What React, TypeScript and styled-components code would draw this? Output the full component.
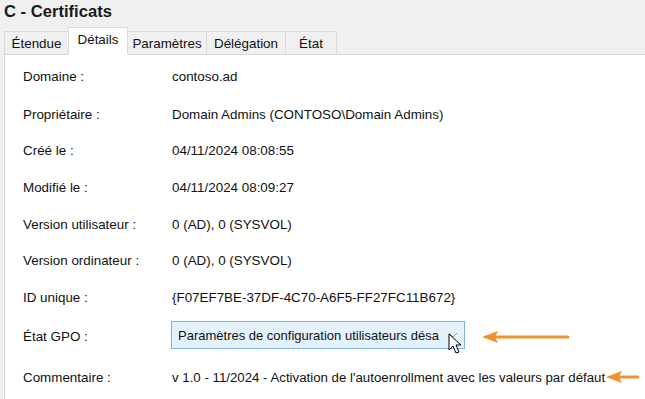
import React from "react";
import styled, { createGlobalStyle } from "styled-components";

const Global = createGlobalStyle`
  html, body { margin: 0; padding: 0; background: #f0f0f0; }
  body { font-family: "Liberation Sans", Arial, sans-serif; overflow: hidden; }
`;

const Page = styled.div`
  width: 645px;
  height: 399px;
  display: flex;
  flex-direction: column;
  background: #f0f0f0;
  overflow: hidden;
`;

const Title = styled.h1`
  margin: 0;
  padding: 2px 0 0 4px;
  height: 24px;
  font-size: 16.6px;
  font-weight: bold;
  color: #1a1a1a;
  line-height: 20px;
`;

const TabStrip = styled.div`
  display: flex;
  align-items: flex-end;
  padding-left: 5px;
  height: 28px;
  position: relative;
  z-index: 1;
`;

const Tab = styled.div<{ $active?: boolean; $w: number }>`
  width: ${(p) => p.$w}px;
  height: ${(p) => (p.$active ? 28 : 23)}px;
  box-sizing: border-box;
  display: flex;
  align-items: center;
  justify-content: center;
  font-size: 13.4px;
  color: #111;
  background: ${(p) => (p.$active ? "#ffffff" : "#f0f0f0")};
  border: 1px solid #dadada;
  border-bottom: ${(p) => (p.$active ? "1px solid #ffffff" : "none")};
  margin-left: -1px;
  margin-bottom: ${(p) => (p.$active ? -1 : 0)}px;
  padding-bottom: ${(p) => (p.$active ? 3 : 0)}px;
`;

const Panel = styled.div`
  flex: 1;
  background: #ffffff;
  border-left: 1px solid #d9d9d9;
  border-top: 1px solid #d9d9d9;
  margin-left: 4px;
  padding: 2px 0 0 18px;
  display: grid;
  grid-template-columns: 149px 1fr;
  grid-template-rows: 39px repeat(6, 36.6px) 42px 40px;
  align-items: center;
  font-size: 13.4px;
  color: #111;
`;

const Label = styled.div`
  white-space: nowrap;
`;

const Value = styled.div<{ $size?: number }>`
  white-space: nowrap;
  display: flex;
  align-items: center;
  ${(p) => (p.$size ? `font-size: ${p.$size}px;` : "")}
`;

const Combo = styled.div`
  width: 294px;
  height: 28px;
  box-sizing: border-box;
  border: 1px solid #7fb4e6;
  background: #e5f1fb;
  display: flex;
  align-items: center;
  padding-left: 6px;
  position: relative;
  margin-left: -1px;
  margin-top: -3px;
  font-size: 13px;
`;

const ComboText = styled.span`
  flex: 1;
  overflow: hidden;
`;

const Chevron = styled.svg`
  width: 10px;
  height: 8px;
  margin-right: 6px;
  flex: none;
`;

const Cursor = styled.svg`
  position: absolute;
  left: 276px;
  top: 11px;
  width: 14px;
  height: 22px;
`;

const Arrow = styled.svg`
  flex: none;
`;

const rows: [string, string][] = [
  ["Domaine :", "contoso.ad"],
  ["Propriétaire :", "Domain Admins (CONTOSO\\Domain Admins)"],
  ["Créé le :", "04/11/2024 08:08:55"],
  ["Modifié le :", "04/11/2024 08:09:27"],
  ["Version utilisateur :", "0 (AD), 0 (SYSVOL)"],
  ["Version ordinateur :", "0 (AD), 0 (SYSVOL)"],
  ["ID unique :", "{F07EF7BE-37DF-4C70-A6F5-FF27FC11B672}"],
];

const OrangeArrow = ({ width, ml, mt }: { width: number; ml: number; mt: number }) => (
  <Arrow width={width} height={14} viewBox={`0 0 ${width} 14`} style={{ marginLeft: ml, marginTop: mt }}>
    <line x1={10} y1={7} x2={width - 2} y2={7} stroke="#f0932e" strokeWidth={3} strokeLinecap="round" />
    <polygon points={`0,7 16,1 13,7 16,13`} fill="#f0932e" />
  </Arrow>
);

const tabs: [string, number][] = [
  ["Étendue", 65],
  ["Détails", 60],
  ["Paramètres", 80],
  ["Délégation", 80],
  ["État", 52],
];

export default function App() {
  return (
    <Page>
      <Global />
      <Title>C - Certificats</Title>
      <TabStrip>
        {tabs.map(([t, w]) => (
          <Tab key={t} $w={w} $active={t === "Détails"}>
            {t}
          </Tab>
        ))}
      </TabStrip>
      <Panel>
        {rows.map(([l, v]) => (
          <React.Fragment key={l}>
            <Label>{l}</Label>
            <Value>{v}</Value>
          </React.Fragment>
        ))}
        <Label>État GPO :</Label>
        <Value>
          <Combo>
            <ComboText>Paramètres de configuration utilisateurs désa</ComboText>
            <Chevron viewBox="0 0 10 8">
              <polyline points="1,2 5,6 9,2" fill="none" stroke="#9a9a9a" strokeWidth={1} />
            </Chevron>
            <Cursor viewBox="0 0 14 22">
              <path d="M1 1 L1 17 L5 13 L8 20 L11 19 L8 12 L13 12 Z" fill="#ffffff" stroke="#000" strokeWidth={1} strokeLinejoin="round" />
            </Cursor>
          </Combo>
          <OrangeArrow width={88} ml={17} mt={0} />
        </Value>
        <Label>Commentaire :</Label>
        <Value $size={13.25}>
          v 1.0 - 11/2024 - Activation de l'autoenrollment avec les valeurs par défaut
          <OrangeArrow width={34} ml={1} mt={-2} />
        </Value>
      </Panel>
    </Page>
  );
}
